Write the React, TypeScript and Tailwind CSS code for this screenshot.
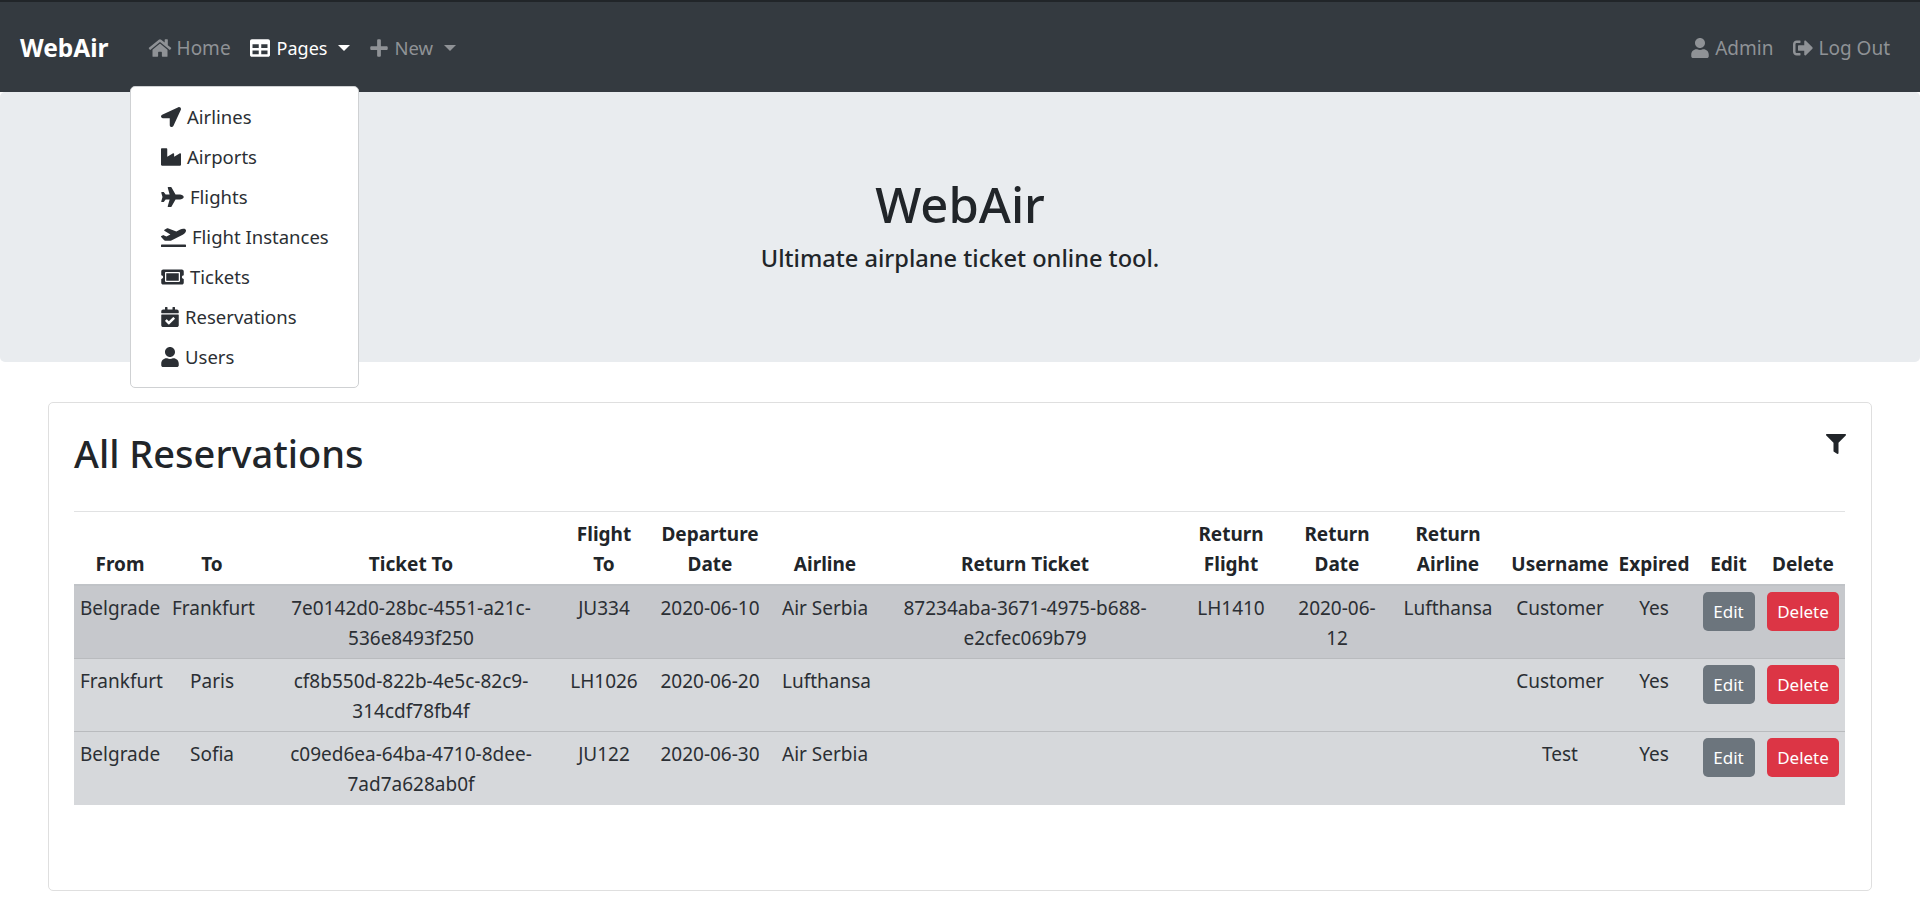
import type { ReactNode } from 'react'
import {
  FaCalendarCheck,
  FaFilter,
  FaHome,
  FaIndustry,
  FaLocationArrow,
  FaPlane,
  FaPlaneDeparture,
  FaPlus,
  FaSignOutAlt,
  FaTable,
  FaTicketAlt,
  FaUser,
} from 'react-icons/fa'

const menu: { icon: ReactNode; label: string }[] = [
  { icon: <FaLocationArrow className="w-5 h-5" />, label: 'Airlines' },
  { icon: <FaIndustry className="w-5 h-5" />, label: 'Airports' },
  { icon: <FaPlane className="w-[23px] h-5" />, label: 'Flights' },
  { icon: <FaPlaneDeparture className="w-[25px] h-5" />, label: 'Flight Instances' },
  { icon: <FaTicketAlt className="w-[23px] h-5" />, label: 'Tickets' },
  { icon: <FaCalendarCheck className="w-[18px] h-5" />, label: 'Reservations' },
  { icon: <FaUser className="w-[18px] h-5" />, label: 'Users' },
]

const columns = [
  { title: ['From'], width: 'w-[92px]' },
  { title: ['To'], width: 'w-[92px]' },
  { title: ['Ticket To'], width: 'w-[306px]' },
  { title: ['Flight', 'To'], width: 'w-[80px]' },
  { title: ['Departure', 'Date'], width: 'w-[132px]' },
  { title: ['Airline'], width: 'w-[98px]' },
  { title: ['Return Ticket'], width: 'w-[302px]' },
  { title: ['Return', 'Flight'], width: 'w-[110px]' },
  { title: ['Return', 'Date'], width: 'w-[102px]' },
  { title: ['Return', 'Airline'], width: 'w-[120px]' },
  { title: ['Username'], width: 'w-[104px]' },
  { title: ['Expired'], width: 'w-[84px]' },
  { title: ['Edit'], width: 'w-[65px]' },
  { title: ['Delete'], width: 'w-[84px]' },
]

const rows = [
  {
    bg: 'bg-[#c6c8cc]',
    cells: [
      'Belgrade',
      'Frankfurt',
      ['7e0142d0-28bc-4551-a21c-', '536e8493f250'],
      'JU334',
      '2020-06-10',
      'Air Serbia',
      ['87234aba-3671-4975-b688-', 'e2cfec069b79'],
      'LH1410',
      ['2020-06-', '12'],
      'Lufthansa',
      'Customer',
      'Yes',
    ],
  },
  {
    bg: 'bg-[#d6d8db]',
    cells: [
      'Frankfurt',
      'Paris',
      ['cf8b550d-822b-4e5c-82c9-', '314cdf78fb4f'],
      'LH1026',
      '2020-06-20',
      'Lufthansa',
      '',
      '',
      '',
      '',
      'Customer',
      'Yes',
    ],
  },
  {
    bg: 'bg-[#d6d8db]',
    cells: [
      'Belgrade',
      'Sofia',
      ['c09ed6ea-64ba-4710-8dee-', '7ad7a628ab0f'],
      'JU122',
      '2020-06-30',
      'Air Serbia',
      '',
      '',
      '',
      '',
      'Test',
      'Yes',
    ],
  },
]

function Lines({ value }: { value: string | string[] }) {
  if (typeof value === 'string') return <>{value}</>
  return (
    <>
      {value.map((line) => (
        <span key={line} className="block">
          {line}
        </span>
      ))}
    </>
  )
}

export default function App() {
  return (
    <div className="min-h-[912px] bg-white text-[#212529] text-[19px] leading-[30px] overflow-hidden font-['Noto_Sans',sans-serif]">
      <nav className="h-[92px] bg-[#343a40] border-t-2 border-[#212529] flex items-center pl-5 pr-[30px] pt-[1px] text-[#8f9296]">
        <span className="text-white font-bold text-[24.5px] mr-[39px]">WebAir</span>
        <a className="flex items-center gap-[5px] mr-[19px]">
          <FaHome className="w-[24px] h-5" />
          Home
        </a>
        <a className="flex items-center gap-[7px] mr-[19px] text-white text-[18px]">
          <FaTable className="w-5 h-5" />
          Pages
          <span className="ml-[4px] border-x-[6px] border-t-[6px] border-x-transparent border-t-white" />
        </a>
        <a className="flex items-center gap-[5px] text-[#8f9296] text-[18.5px]">
          <FaPlus className="w-5 h-5" />
          New
          <span className="ml-[6px] border-x-[6px] border-t-[6px] border-x-transparent border-t-[#8f9296]" />
        </a>
        <a className="flex items-center gap-[6px] ml-auto mr-5">
          <FaUser className="w-[18px] h-5" />
          Admin
        </a>
        <a className="flex items-center gap-[5px]">
          <FaSignOutAlt className="w-5 h-5" />
          Log Out
        </a>
      </nav>

      <div className="relative">
        <div className="h-[270px] bg-[#e9ecef] rounded-[5px] flex flex-col items-center pt-[82px] text-center">
          <h1 className="text-[49px] leading-[60px] font-medium">WebAir</h1>
          <p className="text-[23.6px] leading-[36px] font-medium mt-[6px]">Ultimate airplane ticket online tool.</p>
        </div>
        <div className="absolute left-[130px] top-[-6px] w-[229px] h-[302px] bg-white border border-[#cfd1d3] rounded-[5px] py-[10px] pl-[30px] text-[18.5px] text-[#2b2f34]">
          {menu.map((item) => (
            <div key={item.label} className="h-10 flex items-center gap-[6px]">
              {item.icon}
              {item.label}
            </div>
          ))}
        </div>
      </div>

      <div className="ml-12 mr-12 mt-[40px] h-[489px] border border-[#dfdfdf] rounded-[5px] pl-[25px] pr-[26px] pt-[26px]">
        <div className="flex justify-between h-[82px]">
          <h2 className="text-[38px] leading-[48px] font-medium">All Reservations</h2>
          <FaFilter className="w-5 h-5 mt-[5px] mr-[-1px]" />
        </div>
        <hr className="border-[#e1e2e3]" />
        <table className="w-full table-fixed border-collapse text-center">
          <thead>
            <tr>
              {columns.map((col) => (
                <th key={col.title.join(' ')} className={`${col.width} align-bottom font-bold px-0 pt-[7px] pb-[5px]`}>
                  <Lines value={col.title} />
                </th>
              ))}
            </tr>
          </thead>
          <tbody>
            {rows.map((row, i) => (
              <tr key={i} className={`${row.bg} ${i === 0 ? 'border-t-2 border-[#c0c3c7]' : 'border-t border-[#b9bbbe]'}`}>
                {row.cells.map((cell, j) => (
                  <td key={j} className="h-[73px] align-top px-[6px] pt-[7px] pb-[5px] whitespace-nowrap text-[#2b2f34]">
                    <Lines value={cell} />
                  </td>
                ))}
                <td className="align-top px-[6px] pt-[6px]">
                  <button className="w-[52px] h-[39px] rounded-[5px] bg-[#6c757d] text-white text-[17px] leading-[30px]">
                    Edit
                  </button>
                </td>
                <td className="align-top px-[6px] pt-[6px]">
                  <button className="w-[72px] h-[39px] rounded-[5px] bg-[#dc3545] text-white text-[17px] leading-[30px]">
                    Delete
                  </button>
                </td>
              </tr>
            ))}
          </tbody>
        </table>
      </div>
    </div>
  )
}
